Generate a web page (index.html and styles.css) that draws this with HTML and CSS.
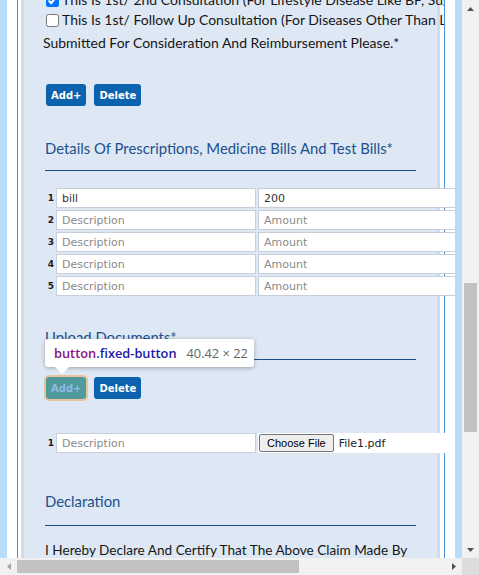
FILE: index.html
```html
<!DOCTYPE html>
<html lang="en">
<head>
<meta charset="utf-8">
<title>Claim Form</title>
<link rel="stylesheet" href="styles.css">
</head>
<body>
<div class="window">
  <div class="viewport">
    <div class="page">
      <div class="panel">
        <div class="inner">
          <div class="checks">
            <label class="check"><input type="checkbox" checked>This Is 1st/ 2nd Consultation (For Lifestyle Disease Like BP, Sugar Etc.)</label>
            <label class="check"><input type="checkbox">This Is 1st/ Follow Up Consultation (For Diseases Other Than Lifestyle Diseases)</label>
          </div>
          <p class="note">Submitted For Consideration And Reimbursement Please.*</p>
          <div class="btns">
            <button class="btn">Add+</button>
            <button class="btn">Delete</button>
          </div>

          <h3 class="sec">Details Of Prescriptions, Medicine Bills And Test Bills*</h3>
          <div class="rows">
            <span class="num">1</span><input class="field" value="bill"><input class="field" value="200">
            <span class="num">2</span><input class="field" placeholder="Description"><input class="field" placeholder="Amount">
            <span class="num">3</span><input class="field" placeholder="Description"><input class="field" placeholder="Amount">
            <span class="num">4</span><input class="field" placeholder="Description"><input class="field" placeholder="Amount">
            <span class="num">5</span><input class="field" placeholder="Description"><input class="field" placeholder="Amount">
          </div>

          <h3 class="sec sec-upload">Upload Documents*</h3>
          <div class="btns btns-upload">
            <button class="btn hl">Add+</button>
            <button class="btn">Delete</button>
            <div class="tip"><span class="tip-tag">button</span><span class="tip-cls">.fixed-button</span><span class="tip-size">40.42 × 22</span></div>
          </div>
          <div class="rows file-row">
            <span class="num">1</span><input class="field" placeholder="Description">
            <div class="file"><span class="choose">Choose File</span><span class="fname">File1.pdf</span></div>
          </div>

          <h3 class="sec sec-decl">Declaration</h3>
          <p class="decl">I Hereby Declare And Certify That The Above Claim Made By Me Is Correct</p>
        </div>
      </div>
    </div>
  </div>
  <div class="vbar">
    <div class="arrow"><svg width="7" height="4" viewBox="0 0 7 4"><polygon points="3.5,0 7,4 0,4" fill="#505050"/></svg></div>
    <div class="vtrack"><div class="vthumb"></div></div>
    <div class="arrow"><svg width="7" height="4" viewBox="0 0 7 4"><polygon points="0,0 7,0 3.5,4" fill="#505050"/></svg></div>
  </div>
  <div class="hbar">
    <div class="arrow"><svg width="4" height="7" viewBox="0 0 4 7"><polygon points="4,0 4,7 0,3.5" fill="#a3a3a3"/></svg></div>
    <div class="htrack"><div class="hthumb"></div></div>
    <div class="arrow"><svg width="4" height="7" viewBox="0 0 4 7"><polygon points="0,0 4,3.5 0,7" fill="#505050"/></svg></div>
  </div>
  <div class="corner"></div>
</div>
</body>
</html>
```

FILE: styles.css
```css
* { box-sizing: border-box; }
html, body { margin: 0; padding: 0; }
body { font-family: Lato, "Open Sans", sans-serif; overflow: hidden; color: #161616; }

.window {
  display: grid;
  grid-template-columns: 462px 17px;
  grid-template-rows: 558px 17px;
  width: 479px;
  height: 575px;
}

.viewport { background: #b9dcf9; padding: 0 7px; overflow: hidden; }
.page { background: #fff; height: 100%; overflow: hidden; }

.panel {
  margin: -10px 0 0 10px;
  width: 428px;
  border-left: 1px solid #4a92d8;
  border-right: 1px solid #4a92d8;
  padding: 0 4px 0 3px;
}
.inner {
  background: #dde8f4;
  border-left: 3px solid #d2dce8;
  border-right: 3px solid #d2dce8;
  padding: 0 0 80px 18px;
}

.checks {
  margin-right: -7px;
  overflow: hidden;
  white-space: nowrap;
  font-size: 14px;
}
.check { display: block; height: 20px; line-height: 20px; }
.check input { margin: 0 3px 0 4px; width: 13px; height: 13px; vertical-align: -2px; }

.note { margin: 3px 0 0 1px; font-size: 14px; line-height: 20px; }

.btns { margin: 31px 0 0 4px; display: flex; gap: 8px; height: 22px; position: relative; }
.btn {
  height: 22px;
  padding: 0 5px;
  background: #0b62ae;
  color: #fff;
  border: 0;
  border-radius: 3px;
  font: bold 10px "DejaVu Sans", sans-serif;
}
.btn.hl { background: #4f9a9b; color: #8fb9e6; box-shadow: 0 0 0 2px #e8c49b; }

.sec {
  margin: 32px 21px 0 3px;
  padding-bottom: 12px;
  border-bottom: 1px solid #1d4c8c;
  font-size: 14.85px;
  font-weight: normal;
  line-height: 20px;
  color: #214f8e;
}
.sec-upload { margin-top: 31px; }
.sec-decl { margin-top: 38px; padding-bottom: 14px; }

.rows {
  margin-top: 17px;
  display: grid;
  grid-template-columns: 12px 200px 200px;
  grid-auto-rows: 20px;
  gap: 2px;
}
.btns-upload { margin-top: 17px; }
.file-row { margin-top: 34px; grid-template-columns: 12px 200px 187px; }

.num {
  align-self: center;
  text-align: right;
  font: bold 9px "DejaVu Sans", sans-serif;
  color: #1b1b1b;
}
.field {
  height: 20px;
  margin: 0;
  border: 1px solid #c6cfda;
  background: #fff;
  padding: 0 5px;
  font: 11px "DejaVu Sans", sans-serif;
  color: #333;
  outline: none;
}
.field::placeholder { color: #8a8a8a; }

.file { background: #fff; display: flex; align-items: center; }
.choose {
  margin-left: 1px;
  height: 18px;
  padding: 0 7px;
  display: flex;
  align-items: center;
  background: #efefef;
  border: 1px solid #767676;
  border-radius: 2px;
  font: 11px "Liberation Sans", Arial, sans-serif;
  color: #000;
}
.fname { margin-left: 5px; font: 11px "DejaVu Sans", sans-serif; color: #222; }

.decl { margin: 14px 21px 0 3px; font-size: 13.6px; line-height: 20px; }

.tip {
  position: absolute;
  left: -1px;
  top: -38px;
  width: 209px;
  height: 28px;
  padding: 0 9px;
  display: flex;
  align-items: center;
  background: #fff;
  border-radius: 3px;
  box-shadow: 0 1px 4px rgba(0,0,0,0.3);
  font: 600 12.8px "Open Sans", sans-serif;
  white-space: nowrap;
}
.tip::after {
  content: "";
  position: absolute;
  left: 10px;
  top: 100%;
  border-left: 7px solid transparent;
  border-right: 7px solid transparent;
  border-top: 7px solid #fff;
}
.tip-tag { color: #881280; }
.tip-cls { color: #1a1aa6; }
.tip-size { margin-left: 10px; font-weight: normal; color: #666; }

.vbar { background: #f1f1f1; display: flex; flex-direction: column; }
.hbar { background: #f1f1f1; display: flex; }
.arrow { width: 17px; height: 17px; flex: none; display: flex; align-items: center; justify-content: center; }
.vtrack { flex: 1; padding: 266px 2px 0; }
.vthumb { height: 149px; background: #c1c1c1; }
.htrack { flex: 1; padding: 2px 0; }
.hthumb { width: 282px; height: 13px; background: #c1c1c1; }
.corner { background: #dcdcdc; }
```
